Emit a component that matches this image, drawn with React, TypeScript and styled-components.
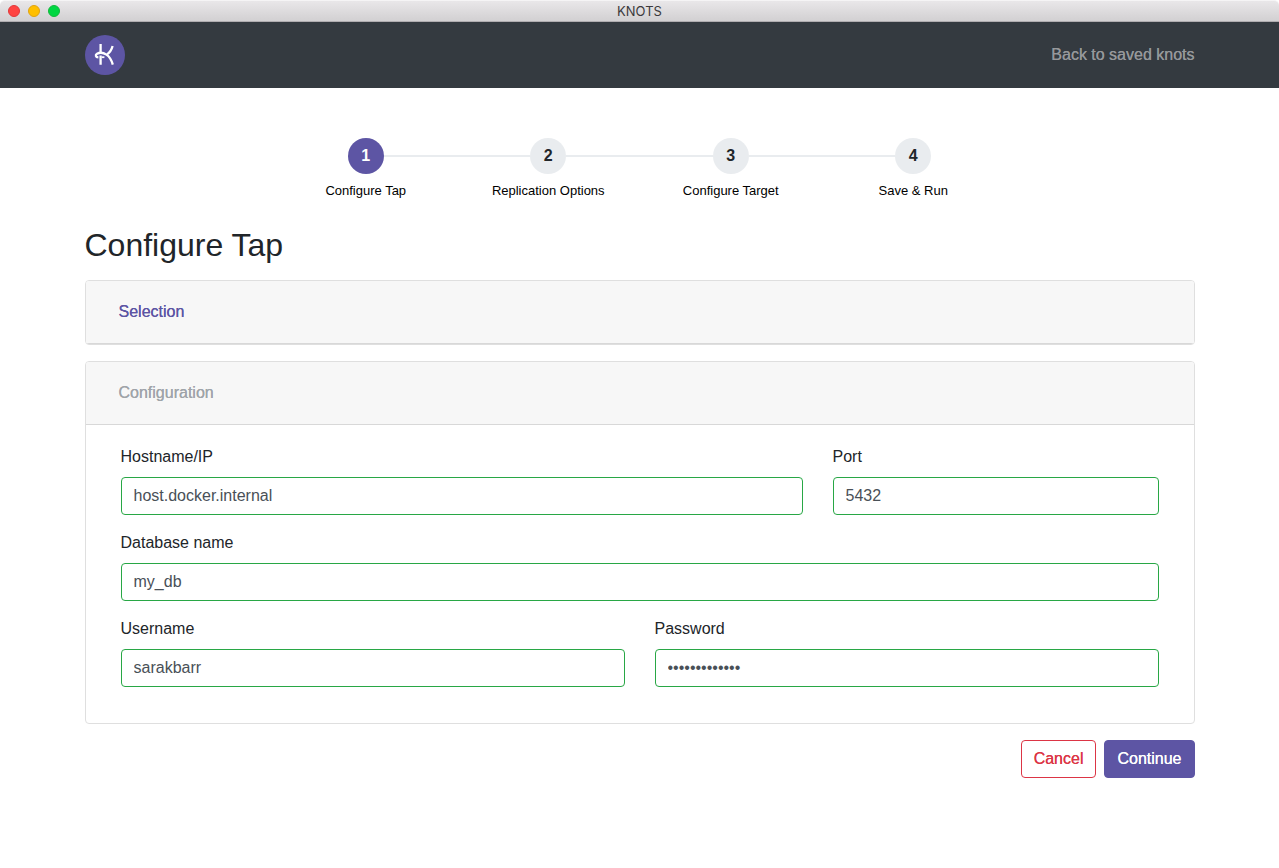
import React from 'react';
import styled, { createGlobalStyle } from 'styled-components';

const purple = '#5d55a4';

const GlobalStyle = createGlobalStyle`
  *, *::before, *::after { box-sizing: border-box; }
  body {
    margin: 0;
    background: #fff;
    color: #212529;
    font: 16px/24px "Liberation Sans", Arial, sans-serif;
  }
  button, input { font: inherit; margin: 0; }
`;

const TitleBar = styled.header`
  display: grid;
  grid-template-columns: 1fr auto 1fr;
  align-items: center;
  height: 22px;
  padding: 0 8px;
  border-top: 1px solid #f5f4f5;
  border-bottom: 1px solid #b0adb0;
  border-radius: 5px 5px 0 0;
  background: linear-gradient(#e9e7e9, #d2d0d2);
`;

const WindowControls = styled.div`
  display: flex;
  gap: 8px;
`;

const WindowDot = styled.button<{ $fill: string; $edge: string }>`
  width: 12px;
  height: 12px;
  padding: 0;
  border: 1px solid ${(p) => p.$edge};
  border-radius: 50%;
  background: ${(p) => p.$fill};
`;

const WindowTitle = styled.span`
  color: #3c3a3c;
  font: 13px/20px Inter, "Liberation Sans", sans-serif;
`;

const NavBar = styled.nav`
  background: #343a40;
`;

const Container = styled.div`
  max-width: 1140px;
  margin: 0 auto;
  padding: 0 15px;
`;

const NavContent = styled(Container)`
  display: flex;
  align-items: center;
  justify-content: space-between;
  height: 66px;
`;

const LogoLink = styled.a`
  display: block;
  height: 40px;
`;

const NavLink = styled.a`
  color: #96989b;
  text-decoration: none;
  text-shadow: 0 0 0 currentColor;
`;

const Stepper = styled.ol`
  display: flex;
  max-width: 730px;
  margin: 50px auto 24px;
  padding: 0;
  list-style: none;
`;

const Step = styled.li`
  display: grid;
  flex: 1;
  grid-template-columns: 1fr 36px 1fr;
  align-items: center;
  row-gap: 7px;
`;

const Connector = styled.span<{ $visible: boolean }>`
  height: 2px;
  background: ${(p) => (p.$visible ? '#e9ecef' : 'transparent')};
`;

const StepNumber = styled.span<{ $active: boolean }>`
  height: 36px;
  border-radius: 50%;
  background: ${(p) => (p.$active ? purple : '#e9ecef')};
  color: ${(p) => (p.$active ? '#fff' : '#212529')};
  font-weight: 700;
  line-height: 36px;
  text-align: center;
`;

const StepLabel = styled.span`
  grid-column: 1 / -1;
  color: #000;
  font-size: 13px;
  line-height: 20px;
  text-align: center;
`;

const PageTitle = styled.h1`
  margin: 0 0 15px;
  font-size: 32px;
  font-weight: 400;
  line-height: 40px;
`;

const Card = styled.section`
  margin-bottom: 16px;
  border: 1px solid #dfdfdf;
  border-radius: 4px;
  overflow: hidden;
`;

const CardHeader = styled.h2`
  margin: 0;
  padding: 12px 20px;
  border-bottom: 1px solid #d8d8d8;
  background: #f7f7f7;
  font-size: 16px;
  font-weight: 400;
`;

const Button = styled.button<{ $text: string; $edge?: string; $fill?: string }>`
  display: block;
  height: 38px;
  padding: 6px 12px;
  border: 1px solid ${(p) => p.$edge ?? 'transparent'};
  border-radius: 4px;
  background: ${(p) => p.$fill ?? 'transparent'};
  color: ${(p) => p.$text};
  line-height: 24px;
  text-shadow: 0 0 0 currentColor;
`;

const Form = styled.form`
  display: grid;
  gap: 16px;
  padding: 20px 35px 36px;
`;

const FieldRow = styled.div<{ $columns: string }>`
  display: grid;
  grid-template-columns: ${(p) => p.$columns};
  gap: 30px;
`;

const FieldGroup = styled.div`
  display: grid;
  gap: 8px;
  min-width: 0;
`;

const Input = styled.input`
  width: 100%;
  height: 38px;
  padding: 6px 12px;
  border: 1px solid #28a745;
  border-radius: 4px;
  background: #fff;
  color: #495057;
  line-height: 24px;
`;

const Actions = styled.div`
  display: flex;
  justify-content: flex-end;
  gap: 8px;
`;

const steps = ['Configure Tap', 'Replication Options', 'Configure Target', 'Save & Run'];

function Logo() {
  return (
    <svg width="40" height="40" viewBox="0 0 40 40" role="img" aria-label="Knots">
      <circle cx="20" cy="20" r="20" fill={purple} />
      <g fill="none" stroke="#fff" strokeWidth="2.3">
        <path d="M15.6 9V17.2M15.6 20.6V29.8" />
        <path d="M27.6 11C26.6 14.8 24.8 17.6 22 19.4" />
        <path d="M13.4 22.3C10.4 22.2 10.2 19.8 12 18.8C14.4 17.5 18.4 17.6 21.4 19.6C24.6 21.7 26.6 25.2 27.8 29.6" />
        <path d="M16.6 22.2H19.4" strokeWidth="1.8" />
      </g>
    </svg>
  );
}

function Field({ id, label, value, type = 'text' }: { id: string; label: string; value: string; type?: string }) {
  return (
    <FieldGroup>
      <label htmlFor={id}>{label}</label>
      <Input id={id} type={type} defaultValue={value} />
    </FieldGroup>
  );
}

export default function App() {
  return (
    <>
      <GlobalStyle />
      <TitleBar>
        <WindowControls>
          <WindowDot $fill="#ff4442" $edge="#e2383a" aria-label="Close" />
          <WindowDot $fill="#ffbf00" $edge="#e0a310" aria-label="Minimize" />
          <WindowDot $fill="#00d742" $edge="#12b83c" aria-label="Zoom" />
        </WindowControls>
        <WindowTitle>KNOTS</WindowTitle>
      </TitleBar>
      <NavBar>
        <NavContent>
          <LogoLink href="#">
            <Logo />
          </LogoLink>
          <NavLink href="#saved">Back to saved knots</NavLink>
        </NavContent>
      </NavBar>
      <Container as="main">
        <Stepper>
          {steps.map((label, i) => (
            <Step key={label}>
              <Connector $visible={i > 0} />
              <StepNumber $active={i === 0}>{i + 1}</StepNumber>
              <Connector $visible={i < steps.length - 1} />
              <StepLabel>{label}</StepLabel>
            </Step>
          ))}
        </Stepper>
        <PageTitle>Configure Tap</PageTitle>
        <Card>
          <CardHeader>
            <Button type="button" $text={purple}>Selection</Button>
          </CardHeader>
        </Card>
        <Card>
          <CardHeader>
            <Button type="button" disabled $text="#9fa4a9">Configuration</Button>
          </CardHeader>
          <Form id="tap-config">
            <FieldRow $columns="682fr 326fr">
              <Field id="host" label="Hostname/IP" value="host.docker.internal" />
              <Field id="port" label="Port" value="5432" />
            </FieldRow>
            <FieldRow $columns="1fr">
              <Field id="database" label="Database name" value="my_db" />
            </FieldRow>
            <FieldRow $columns="1fr 1fr">
              <Field id="username" label="Username" value="sarakbarr" />
              <Field id="password" label="Password" value="knotspassword" type="password" />
            </FieldRow>
          </Form>
        </Card>
        <Actions>
          <Button type="button" $text="#dc3545" $edge="#dc3545" $fill="#fff">Cancel</Button>
          <Button type="submit" form="tap-config" $text="#fff" $edge={purple} $fill={purple}>Continue</Button>
        </Actions>
      </Container>
    </>
  );
}
